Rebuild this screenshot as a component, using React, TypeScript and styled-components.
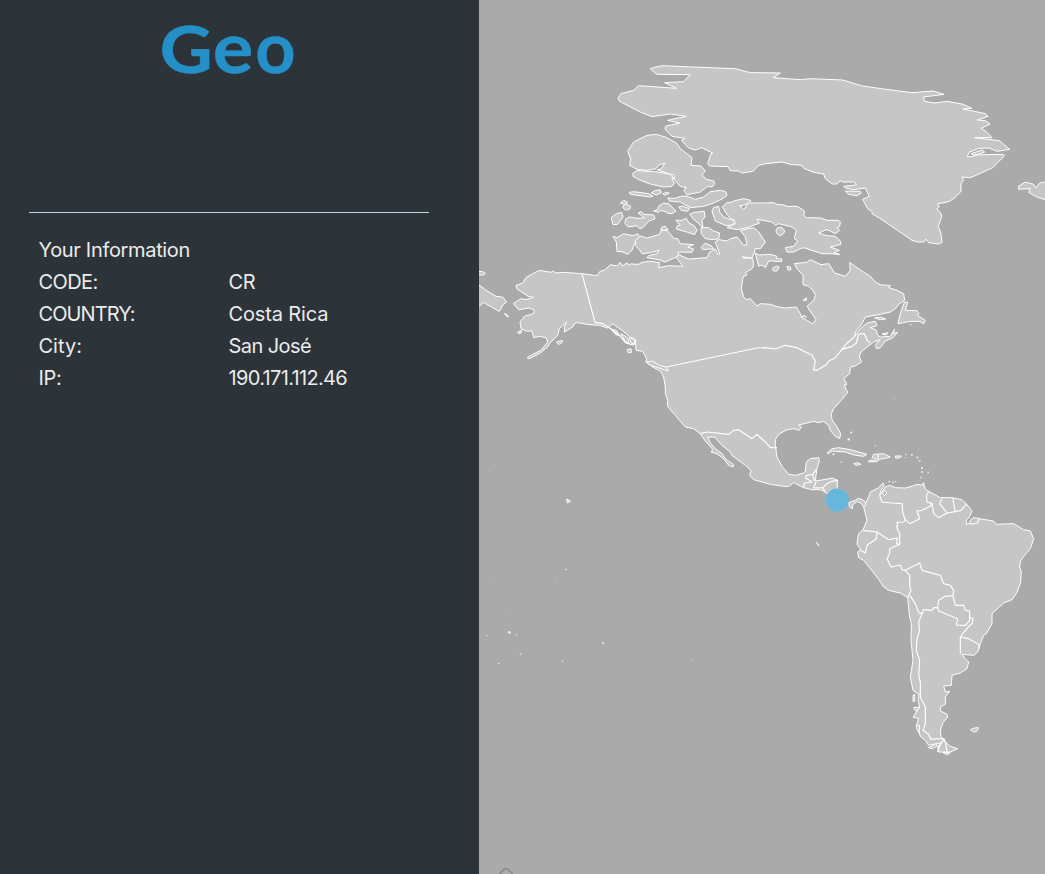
import React from "react";
import styled, { createGlobalStyle } from "styled-components";

const GlobalStyle = createGlobalStyle`
  *, *::before, *::after { box-sizing: border-box; }
  body { margin: 0; overflow: hidden; }
`;

const Page = styled.main`
  display: grid;
  grid-template-columns: 479px minmax(0, 1fr);
  height: 100vh;
  font-family: Inter, "Liberation Sans", sans-serif;
`;

const Sidebar = styled.aside`
  display: flex;
  flex-direction: column;
  padding: 0 50px 0 29px;
  background: #2d3439;
`;

const Brand = styled.header`
  height: 212px;
`;

const Wordmark = styled.svg`
  display: block;
  width: 400px;
  height: 100px;
  fill: #2590c8;
  font-family: Lato, sans-serif;
  font-weight: 700;
`;

const Details = styled.section`
  padding: 21px 9.5px;
  border-top: 1px solid #a9dde6;
`;

const Line = styled.div`
  display: grid;
  grid-template-columns: 190px 1fr;
  height: 32px;
  line-height: 32px;
  font-size: 20px;
  color: #ebebeb;
  white-space: nowrap;
`;

const Word = styled.span<{ $spacing?: number }>`
  letter-spacing: ${(p) => p.$spacing ?? 0}px;
`;

const MapPanel = styled.section`
  background: #aaaaaa;
  overflow: hidden;
`;

const MapDrawing = styled.svg`
  display: block;
  width: 566px;
  height: 874px;
`;

const Land = styled.polygon`
  fill: #c6c6c6;
  stroke: #ffffff;
  stroke-width: 1;
  stroke-linejoin: round;
`;

const Water = styled(Land)`
  fill: #aaaaaa;
`;

const Border = styled.polyline`
  fill: none;
  stroke: #ffffff;
  stroke-width: 1.15;
  stroke-linejoin: round;
`;

const Islet = styled.circle`
  fill: #ededed;
`;

/* Each map sheet has its own origin and holds three units to the pixel. */
type Sheet = [number, number];
const ARCTIC: Sheet = [600, 50];
const GREENLAND: Sheet = [800, 50];
const ARCHIPELAGO: Sheet = [600, 170];
const ALASKA: Sheet = [479, 250];
const HUDSON: Sheet = [650, 240];
const STATES: Sheet = [650, 350];
const CARIBBEAN: Sheet = [780, 420];
const AMAZON: Sheet = [850, 470];
const PATAGONIA: Sheet = [850, 590];

const on = ([ox, oy]: Sheet, coords: string) =>
  coords
    .trim()
    .split(/\s+/)
    .map((pair) => {
      const [x, y] = pair.split(",").map(Number);
      return `${(ox + (x + 1) / 3).toFixed(2)},${(oy + (y + 1) / 3).toFixed(2)}`;
    })
    .join(" ");

const greenland = [
  on(ARCTIC, "150,56 162,51 188,46 250,49 405,55 450,67 540,68 518,82 600,88"),
  on(
    GREENLAND,
    "30,85 127,89 187,107 250,116 335,127 398,122 431,132 370,140 372,153 403,158 440,153 485,161 515,174 488,176 556,190 563,198 531,209 556,211 569,221 543,234 560,246 575,262 522,262 597,271 628,297 590,303 566,293 535,294 506,306 501,319 515,319 553,305 546,299 512,310 518,314 609,312 612,317 577,352 520,378 508,382 485,380 490,388 482,400 482,423 463,443 445,454 411,461 417,470 409,477 420,486 424,498 414,528 422,550 425,577 414,581 385,577 376,566 370,575 352,575 335,570 305,549 262,520 237,503 215,490 215,483 202,475 187,447 207,438 195,413 160,418 135,413 130,408 168,404 163,395 128,395 120,391 109,401 96,401 75,385 70,371 40,366 10,354"
  ),
  on(
    ARCTIC,
    "607,350 605,345 570,342 545,335 495,340 475,345 458,363 425,368 415,362 390,361 383,349 328,347 322,340 332,310 337,308 303,292 285,299 265,293 243,270 255,264 215,258 195,238 195,228 238,218 202,210 258,198 210,191 155,199 120,185 58,153 53,143 62,130 100,120 115,106 228,114 193,97 250,94 270,73 170,72"
  ),
].join(" ");

const northAmerica = [
  on(
    ARCHIPELAGO,
    "0,303 15,298 30,283 50,287 60,276 65,287 80,278 85,285 90,281 115,282 125,276 150,273 178,277 175,292 205,286 248,288 228,262 232,252 265,266 320,262 328,245 345,236 352,252 358,250 345,215 355,208 380,212 390,205 410,200 430,225 440,222 435,200 420,180 460,172 475,185 495,215 480,235 465,235 462,246 455,262 430,264 426,259 457,264 460,280"
  ),
  on(
    HUDSON,
    "310,75 305,85 285,97 290,103 278,110 273,145 280,170 290,178 300,175 320,197 330,190 360,192 380,199 405,203 438,200 450,220 455,232 487,250 497,238 470,198 490,180 495,165 488,150 475,138 458,133 458,105 440,85 432,70 470,66 480,58 512,73 535,70 553,98 585,108 600,90 598,67 635,92 660,108 675,125 690,133 720,136 715,142 740,150 760,160 763,180 745,192 735,205 720,215 680,224 645,230 635,250 617,272 612,290 630,265 650,248 675,243 680,256 660,262 678,270 682,285 690,290 720,288 733,267 728,280 742,276 728,292 705,302 690,322 678,325 676,312 690,298 670,305 632,335 627,350 634,365 612,378 600,380 598,400 580,415 590,432 582,432 588,450"
  ),
  on(
    STATES,
    "593,125 575,147 550,175 543,190 545,208 560,230 571,250 568,265 555,258 540,240 535,225 520,213 505,217 490,213 445,224 453,230 446,240 430,235 410,238 388,250 375,267 375,285 380,320 395,348 415,372 435,375 460,368 465,362 468,335 480,325 505,322 507,332 500,355 497,375 495,392 520,388 545,383 562,390 560,420 562,440 540,435 520,423 510,418 485,418 460,412 430,397 415,408 400,408 360,402 310,388 298,375 302,360 285,345 245,315 240,305 215,285 193,260 172,260 180,278 195,295 215,310 225,325 250,343 248,350 235,345 220,325 200,310 182,305 187,297 165,272 150,250 130,235 105,230 75,195 52,168 52,150 45,130 45,110 40,80 30,62"
  ),
  on(
    ALASKA,
    "520,350 500,335 502,325 490,303 470,300 468,268 450,258 430,242 400,220 385,233 360,225 330,223 295,217 285,220 280,230 255,245 255,230 262,215 240,235 235,255 210,280 205,290 180,310 150,325 143,322 160,312 185,300 205,275 200,262 180,258 163,262 158,242 140,242 125,235 122,215 135,198 162,190 166,180 150,173 118,178 102,160 125,145 140,148 162,141 145,137 112,115 110,105 130,98 140,82 160,70 180,60 215,66 220,62 230,68 250,66 308,70 345,75 355,75 360,65"
  ),
].join(" ");

const southAmerica = [
  on(
    AMAZON,
    "45,100 55,80 60,65 85,52 98,38 102,45 92,60 88,75 95,65 105,50 120,45 135,52 165,53 185,48 200,42 222,45 225,58 245,68 270,82 305,82 335,88 350,103 365,122 357,140 348,150 348,162 360,158 382,158 385,145 430,152 438,162 490,160 520,178 540,182 550,205 540,235 520,258 510,273 508,290 513,305 510,340 498,370 485,388 460,398 425,430"
  ),
  on(
    PATAGONIA,
    "425,70 425,100 408,130 400,135 390,160 382,185 370,195 335,192 345,205 355,215 350,235 330,248 305,255 303,285 280,287 285,305 298,303 285,320 285,342 270,350 270,362 290,372 292,380 278,397 270,420 272,440 285,455 300,468 322,475 300,485 265,485 262,470 270,458 250,462 235,465 225,450 210,438 205,420 200,400 205,385 188,380 200,362 208,350 203,330 205,312 188,300 180,260 188,210 182,150 183,100 178,80 172,22 150,8 115,0"
  ),
  on(AMAZON, "98,348 93,338 68,305 40,270 25,262 22,245 32,238 20,222 22,205 25,190 38,178 50,150 40,110"),
].join(" ");

const islands = [
  on(GREENLAND, "135,422 180,423 183,428 170,436 145,432"),
  on(GREENLAND, "655,407 675,395 700,402 707,413 718,398 740,394 740,450 705,438 685,426 690,415 665,416 655,417"),
  on(
    ARCTIC,
    "82,303 100,275 140,255 168,252 195,260 228,278 240,295 275,322 272,345 302,347 315,362 305,373 318,387 340,392 343,400 335,410 322,408 300,425 260,433 250,420 258,412 240,408 222,388 222,374 205,370 170,358 182,356 194,338 176,344 166,355 140,360 110,357 92,347 88,346 91,325"
  ),
  on(ARCTIC, "98,368 110,361 172,365 212,372 222,386 214,382 222,400 215,408 190,410 150,401 120,390 98,378"),
  on(ARCTIC, "87,426 100,424 145,430 158,438 150,440 90,432"),
  on(ARCTIC, "153,428 165,420 180,419 182,428 168,434"),
  on(ARCTIC, "188,430 200,425 207,429 192,435"),
  on(ARCTIC, "202,443 225,444 240,438 258,437 285,447 310,440 330,424 360,420 376,424 380,435 365,446 335,460 310,468 270,472 240,455 208,452"),
  on(ARCHIPELAGO, "60,98 70,90 82,96 75,102"),
  on(ARCHIPELAGO, "67,108 75,101 90,107 89,115 78,120 70,115"),
  on(ARCHIPELAGO, "33,142 48,130 64,126 68,140 52,162 38,163"),
  on(ARCHIPELAGO, "76,146 88,140 110,144 133,143 113,128 122,124 132,132 160,134 164,145 145,153 128,172 118,175 110,166 84,170 74,160"),
  on(ARCHIPELAGO, "160,122 172,118 175,107 190,98 206,101 227,122 215,130 200,128 195,124 180,120 175,126"),
  on(ARCHIPELAGO, "235,110 245,107 267,115 262,123 243,120"),
  on(ARCHIPELAGO, "227,150 245,150 258,144 266,158 280,165 290,178 283,193 262,186 228,176 230,168 240,163 232,158"),
  on(ARCHIPELAGO, "268,132 282,126 312,123 314,140 305,150 308,172 295,160 275,142"),
  on(ARCHIPELAGO, "335,122 340,112 355,108 358,125 370,140 405,153 395,164 378,166 345,152"),
  on(ARCHIPELAGO, "38,198 50,202 70,190 98,196 112,190 117,198 100,225 95,240 82,252 68,245 50,243 48,215"),
  on(ARCHIPELAGO, "105,210 120,197 140,203 178,192 183,180 200,180 222,205 232,205 240,220 280,223 262,230 280,236 275,246 235,245 232,258 195,275 175,268 140,262 145,256 170,250 176,240 150,247 125,250 118,240 105,225"),
  on(ARCHIPELAGO, "181,178 185,170 195,168 203,177 192,180"),
  on(ARCHIPELAGO, "302,172 325,172 340,182 358,188 355,205 340,208 315,205 303,190"),
  on(ARCHIPELAGO, "302,232 315,218 335,228 340,235 308,238"),
  on(
    ARCHIPELAGO,
    "366,110 378,98 395,95 400,92 430,85 450,90 450,98 490,98 520,97 530,102 545,103 560,108 590,108 613,122 610,135 618,142 660,143 680,150 715,150 720,155 718,168 710,172 718,180 705,190 690,182 678,178 655,188 680,196 705,198 720,212 722,222 690,230 717,240 700,248 718,252 690,250 665,250 610,232 600,235 580,245 560,245 555,232 580,228 592,212 582,205 588,180 575,170 535,160 525,165 515,155 470,147 478,158 440,172 410,178 380,172 405,160 402,150 388,142 375,125"
  ),
  on(ARCHIPELAGO, "527,180 532,172 545,172 553,182 550,190 540,196 530,190"),
  on(HUDSON, "315,38 325,44 360,42 380,48 378,55 395,56 393,64 365,62 355,62 345,82 335,74 325,78"),
  on(HUDSON, "366,85 378,77 386,80 380,92 370,92"),
  on(HUDSON, "410,78 420,80 422,88 414,90"),
  on(HUDSON, "458,180 468,172 468,180"),
  on(HUDSON, "743,250 750,220 762,186 772,185 765,210 800,211 806,220 802,226 825,240 820,250 808,243 780,243"),
  on(HUDSON, "673,233 690,230 706,236 690,238"),
  on(HUDSON, "695,281 712,277 708,284"),
  on(ALASKA, "500,335 520,333 540,345 560,350 567,362 555,358 515,345"),
  on(ALASKA, "443,298 455,295 456,306 447,307"),
  on(ALASKA, "398,238 412,240 420,256 408,252"),
  on(ALASKA, "425,250 445,262 450,280 438,274"),
  on(ALASKA, "450,262 466,268 466,282 455,278"),
  on(ALASKA, "232,275 248,270 250,275 238,283"),
  on(ALASKA, "115,245 127,240 125,248 117,250"),
  on(ALASKA, "75,190 82,192 89,200 80,196"),
  on(ALASKA, "-6,102 5,108 20,120 50,138 70,140 82,155 72,162 60,183 40,172 12,156 0,168 -6,170"),
  on(ALASKA, "-6,63 10,64 18,69 12,74 -6,73"),
  on(CARIBBEAN, "140,98 155,85 175,82 210,88 260,102 250,108 225,105 195,95 155,92 145,100"),
  on(CARIBBEAN, "220,130 232,127 242,132 228,135"),
  on(CARIBBEAN, "263,124 270,119 285,120 286,114 275,112 280,102 310,100 330,110 310,115 295,117 290,124"),
  on(CARIBBEAN, "345,107 363,107 358,113 346,113"),
  on(CARIBBEAN, "205,247 225,240 235,234 250,240 258,252 250,262 244,250 232,243 217,253 216,265 208,260"),
  on(CARIBBEAN, "108,366 112,370 116,377"),
  on(AMAZON, "358,152 368,142 386,144 382,158 362,162"),
  on(PATAGONIA, "188,315 194,313 193,333 188,333"),
  on(PATAGONIA, "190,352 205,350 202,360 194,360"),
  on(PATAGONIA, "198,403 208,406 206,428 200,418"),
  on(PATAGONIA, "234,472 256,461 262,466 246,475"),
  on(PATAGONIA, "278,487 300,487 290,493"),
  on(PATAGONIA, "360,418 372,413 385,412 380,422 370,425"),
  "566.5,499 570.5,501 567.5,503",
];

const waters = [
  on(ARCHIPELAGO, "418,106 430,118 445,97 430,105"),
  on(AMAZON, "97,65 104,60 109,70 102,76"),
];

const borders = [
  on(ALASKA, "308,70 347,216 370,220 395,235 420,255 440,278 460,284 470,276"),
  on(ALASKA, "390,232 405,245 425,258"),
  on(HUDSON, "48,380 320,323 345,322 375,326 405,315 440,322 485,345 495,362 490,388 500,390 530,372 535,362 555,352 575,327 605,318 618,308 625,282 642,280 650,300 660,308"),
  on(HUDSON, "575,327 590,308 612,290"),
  on(HUDSON, "452,230 462,226 468,232"),
  on(STATES, "150,250 170,245 235,252 250,240 265,238 305,265 320,252 350,280 360,292 380,292"),
  on(STATES, "460,410 462,398 485,395 465,382 470,375 487,372 497,358"),
  on(STATES, "487,372 492,393"),
  on(STATES, "490,413 497,395"),
  on(STATES, "490,413 518,412 530,400 545,393 562,390"),
  on(STATES, "518,412 524,424"),
  on(CARIBBEAN, "293,102 293,122"),
  on(AMAZON, "88,75 95,95 125,98 155,100 158,130 165,148 178,160 208,145 200,122 215,120 240,108 245,100 230,95 228,75 235,65"),
  on(AMAZON, "245,100 250,130 265,142 290,128 268,100 275,85"),
  on(AMAZON, "290,128 315,124 310,100 308,83"),
  on(AMAZON, "315,124 332,120 350,100"),
  on(AMAZON, "165,148 160,155 140,156 142,168 138,170 148,190 148,222 138,220 142,203 115,208 80,185 38,180"),
  on(AMAZON, "80,185 78,205 50,225 45,248 30,240"),
  on(AMAZON, "148,222 118,235 118,250 110,265 122,290 150,284 155,298 165,300 208,278 215,300 270,315 280,340 300,345 310,360 308,378 315,405 340,405 345,420 358,422 358,450 345,466 318,464 322,445 265,422 262,412 265,390 285,378 308,376"),
  on(AMAZON, "165,300 178,315 178,345 182,360 172,382"),
  on(AMAZON, "178,375 195,400 205,427 215,430 220,418 245,420 250,412 262,412"),
  on(PATAGONIA, "358,80 368,85 366,98 345,120 330,140 355,145 385,162 387,175"),
  on(PATAGONIA, "330,140 330,190"),
  on(PATAGONIA, "215,70 205,95 208,120 200,145 198,180 208,210 205,255 210,275 210,320 225,350 225,400 218,420 235,432 242,447 280,444"),
  on(PATAGONIA, "280,444 285,455 290,485"),
  on(PATAGONIA, "262,485 268,465 280,447"),
];

const islets: [number, number, number][] = [
  [848.8, 439.3, 1.2], [851.2, 432.6, 1.1], [875.5, 446, 0.7], [833.5, 454.3, 1.1],
  [841.3, 462.3, 0.8], [905.9, 454.6, 0.8], [905.5, 457.6, 0.7], [911.9, 455, 1],
  [917.3, 457.6, 1], [919.6, 461, 1], [922, 468, 1.1], [922, 472, 1.1],
  [928.2, 472.3, 0.9], [921, 477.6, 0.8], [889.3, 481.6, 0.9], [893, 482.3, 0.9],
  [895.6, 481.6, 0.8], [923.5, 483.8, 1.3], [894, 398, 0.6], [911, 324.7, 0.8],
  [489, 471, 0.4], [566, 569.5, 0.8], [509.4, 632.4, 1.4], [516.5, 634.8, 0.8],
  [486.5, 635.5, 0.7], [603, 643, 1.1], [520.5, 654.2, 0.8], [498.6, 663.5, 0.8],
  [562.6, 661.3, 0.7], [691.5, 660.4, 0.5], [491.8, 576.5, 0.35], [556.5, 578.5, 0.4],
  [508.5, 612.3, 0.4],
];

const details: { label: string; value: string; labelSpacing: number; valueSpacing: number }[] = [
  { label: "CODE:", value: "CR", labelSpacing: -0.6, valueSpacing: -0.4 },
  { label: "COUNTRY:", value: "Costa Rica", labelSpacing: -0.9, valueSpacing: -0.15 },
  { label: "City:", value: "San José", labelSpacing: 0, valueSpacing: -0.58 },
  { label: "IP:", value: "190.171.112.46", labelSpacing: -0.3, valueSpacing: -0.66 },
];

function WorldMap() {
  return (
    <MapDrawing viewBox="479 0 566 874">
      <Land points={greenland} />
      <Land points={northAmerica} />
      <Land points={southAmerica} />
      {islands.map((points) => (
        <Land key={points} points={points} />
      ))}
      {waters.map((points) => (
        <Water key={points} points={points} />
      ))}
      {borders.map((points) => (
        <Border key={points} points={points} />
      ))}
      {islets.map(([x, y, r]) => (
        <Islet key={`${x}-${y}`} cx={x} cy={y} r={r} />
      ))}
      <circle cx="837.2" cy="500.1" r="11.6" fill="#67b7dc" />
      <path d="M499 875Q503.5 868.6 506 868.6Q508.5 868.6 513 875" fill="none" stroke="#8b8b8b" strokeWidth="1.8" />
    </MapDrawing>
  );
}

export default function App() {
  return (
    <>
      <GlobalStyle />
      <Page>
        <Sidebar>
          <Brand>
            <Wordmark viewBox="29 0 400 100" role="img" aria-label="Geo">
              <text transform="translate(159.8 72.7) scale(1.13 1)" fontSize="64.5" stroke="#2590c8" strokeWidth="0.6">G</text>
              <text transform="translate(212.8 72.7) scale(1.1 1.02)" fontSize="69" stroke="#2590c8" strokeWidth="0.4">e</text>
              <text transform="translate(255.3 72.7) scale(1.01 1.02)" fontSize="69.5" stroke="#2590c8" strokeWidth="0.4">o</text>
            </Wordmark>
          </Brand>
          <Details>
            <Line>
              <Word $spacing={-0.33}>Your Information</Word>
            </Line>
            {details.map((d) => (
              <Line key={d.label}>
                <Word $spacing={d.labelSpacing}>{d.label}</Word>
                <Word $spacing={d.valueSpacing}>{d.value}</Word>
              </Line>
            ))}
          </Details>
        </Sidebar>
        <MapPanel>
          <WorldMap />
        </MapPanel>
      </Page>
    </>
  );
}
